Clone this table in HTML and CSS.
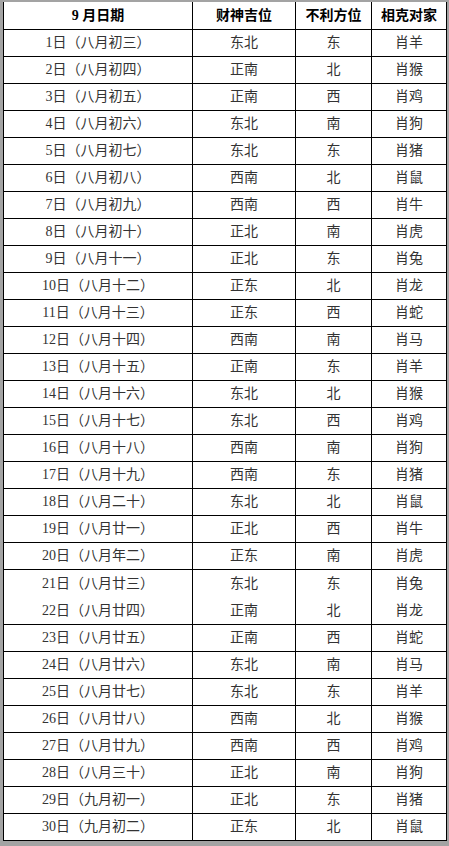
FILE: index.html
```html
<!DOCTYPE html>
<html lang="zh-CN">
<head>
<meta charset="utf-8">
<title>9月日期</title>
<link rel="stylesheet" href="styles.css">
</head>
<body>
<div class="frame">
<table class="almanac">
<colgroup>
<col class="c1"><col class="c2"><col class="c3"><col class="c4">
</colgroup>
<thead>
<tr><th>9 月日期</th><th>财神吉位</th><th>不利方位</th><th>相克对家</th></tr>
</thead>
<tbody>
<tr><td>1日（八月初三）</td><td>东北</td><td>东</td><td>肖羊</td></tr>
<tr><td>2日（八月初四）</td><td>正南</td><td>北</td><td>肖猴</td></tr>
<tr><td>3日（八月初五）</td><td>正南</td><td>西</td><td>肖鸡</td></tr>
<tr><td>4日（八月初六）</td><td>东北</td><td>南</td><td>肖狗</td></tr>
<tr><td>5日（八月初七）</td><td>东北</td><td>东</td><td>肖猪</td></tr>
<tr><td>6日（八月初八）</td><td>西南</td><td>北</td><td>肖鼠</td></tr>
<tr><td>7日（八月初九）</td><td>西南</td><td>西</td><td>肖牛</td></tr>
<tr><td>8日（八月初十）</td><td>正北</td><td>南</td><td>肖虎</td></tr>
<tr><td>9日（八月十一）</td><td>正北</td><td>东</td><td>肖兔</td></tr>
<tr><td>10日（八月十二）</td><td>正东</td><td>北</td><td>肖龙</td></tr>
<tr><td>11日（八月十三）</td><td>正东</td><td>西</td><td>肖蛇</td></tr>
<tr><td>12日（八月十四）</td><td>西南</td><td>南</td><td>肖马</td></tr>
<tr><td>13日（八月十五）</td><td>正南</td><td>东</td><td>肖羊</td></tr>
<tr><td>14日（八月十六）</td><td>东北</td><td>北</td><td>肖猴</td></tr>
<tr><td>15日（八月十七）</td><td>东北</td><td>西</td><td>肖鸡</td></tr>
<tr><td>16日（八月十八）</td><td>西南</td><td>南</td><td>肖狗</td></tr>
<tr><td>17日（八月十九）</td><td>西南</td><td>东</td><td>肖猪</td></tr>
<tr><td>18日（八月二十）</td><td>东北</td><td>北</td><td>肖鼠</td></tr>
<tr><td>19日（八月廿一）</td><td>正北</td><td>西</td><td>肖牛</td></tr>
<tr><td>20日（八月年二）</td><td>正东</td><td>南</td><td>肖虎</td></tr>
<tr class="double"><td>21日（八月廿三）<br>22日（八月廿四）</td><td>东北<br>正南</td><td>东<br>北</td><td>肖兔<br>肖龙</td></tr>
<tr><td>23日（八月廿五）</td><td>正南</td><td>西</td><td>肖蛇</td></tr>
<tr><td>24日（八月廿六）</td><td>东北</td><td>南</td><td>肖马</td></tr>
<tr><td>25日（八月廿七）</td><td>东北</td><td>东</td><td>肖羊</td></tr>
<tr><td>26日（八月廿八）</td><td>西南</td><td>北</td><td>肖猴</td></tr>
<tr><td>27日（八月廿九）</td><td>西南</td><td>西</td><td>肖鸡</td></tr>
<tr><td>28日（八月三十）</td><td>正北</td><td>南</td><td>肖狗</td></tr>
<tr><td>29日（九月初一）</td><td>正北</td><td>东</td><td>肖猪</td></tr>
<tr><td>30日（九月初二）</td><td>正东</td><td>北</td><td>肖鼠</td></tr>
</tbody>
</table>
</div>
</body>
</html>
```
FILE: styles.css
```css
html, body {
  margin: 0;
  padding: 0;
  background: #a3a3a3;
}
.frame {
  padding: 2px 3px 5px 3px;
  width: 443px;
}
.almanac {
  width: 443px;
  table-layout: fixed;
  border-collapse: separate;
  border-spacing: 0;
  background: #fff;
  border-left: 1px solid #000;
  font-family: "Liberation Serif", "Noto Sans CJK SC", serif;
  font-size: 14px;
  color: #333;
}
.c1 { width: 189px; }
.c2 { width: 103px; }
.c3 { width: 76px; }
.c4 { width: 75px; }
.almanac th,
.almanac td {
  box-sizing: border-box;
  padding: 0;
  text-align: center;
  vertical-align: middle;
  border-right: 1px solid #000;
  border-bottom: 1px solid #000;
  line-height: 26px;
  height: 27px;
  white-space: nowrap;
}
.almanac th {
  height: 28px;
  line-height: 27px;
  font-weight: bold;
  color: #000;
}
.almanac .double td {
  height: 54px;
  line-height: 27px;
}
```
